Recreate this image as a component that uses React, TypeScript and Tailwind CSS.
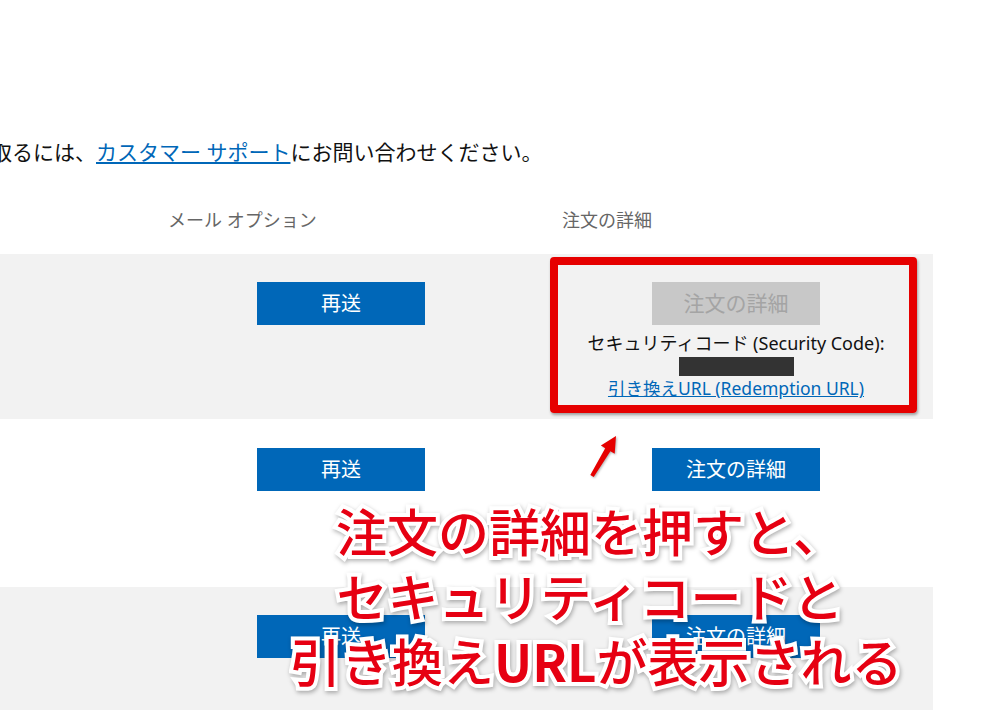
import React from 'react';

const font = { fontFamily: '"Noto Sans", "Noto Sans CJK JP", sans-serif' };

function BlueButton({ label }: { label: string }) {
    return (
        <div className="w-[168px] h-[43px] bg-[#0067b8] text-white text-[20px] flex items-center justify-center">
            {label}
        </div>
    );
}

function OrderRow({ gray, height, top, detail }: { gray: boolean; height: string; top: string; detail?: boolean }) {
    return (
        <div className={`grid grid-cols-[158px_394px_381px] ${height} ${gray ? 'bg-[#f2f2f2]' : 'bg-white'}`}>
            <div />
            <div className={`w-[366px] flex justify-center ${top}`}>
                <BlueButton label="再送" />
            </div>
            <div className={`w-[368px] flex flex-col items-center ${top}`}>
                {detail ? (
                    <>
                        <div className="w-[168px] h-[43px] bg-[#c8c8c8] text-[#a4a4a4] text-[21px] flex items-center justify-center">
                            注文の詳細
                        </div>
                        <p className="mt-[7px] text-[18px] leading-[22px] text-[#111]">セキュリティコード (Security Code):</p>
                        <div className="mt-[3px] w-[115px] h-[19px] bg-[#333]" />
                        <a className="mt-[1px] text-[17.5px] leading-[22px] text-[#0067b8] underline">引き換えURL (Redemption URL)</a>
                    </>
                ) : (
                    <BlueButton label="注文の詳細" />
                )}
            </div>
        </div>
    );
}

export default function App() {
    return (
        <div className="relative w-[1000px] h-[710px] overflow-hidden bg-white" style={font}>
            <p className="pt-[138px] -ml-[9px] text-[21px] leading-[28px] text-[#111] whitespace-nowrap">
                取るには、<a className="text-[#0067b8] underline">カスタマー サポート</a>にお問い合わせください。
            </p>
            <div className="grid grid-cols-[158px_394px_381px] w-[933px] h-[88px] pt-[42px] text-[18px] leading-[24px] text-[#666]">
                <div />
                <div className="px-[10px]">メール オプション</div>
                <div className="px-[10px]">注文の詳細</div>
            </div>
            <div className="w-[933px]">
                <OrderRow gray height="h-[165px]" top="pt-[28px]" detail />
                <OrderRow gray={false} height="h-[168px]" top="pt-[29px]" />
                <OrderRow gray height="h-[140px]" top="pt-[28px]" />
            </div>

            {/* annotation overlay */}
            <div className="absolute left-[550px] top-[257px] w-[367px] h-[156px] border-[8px] border-[#e60000] rounded-[4px] shadow-[1px_2px_3px_rgba(0,0,0,0.35)]" />
            <svg className="absolute left-[580px] top-[425px] [filter:drop-shadow(1px_1px_1px_rgba(0,0,0,0.3))]" width="44" height="56" viewBox="0 0 44 56">
                <path d="M10.3 50 L25.2 23.2 L20.9 20.6 L36 11 L34.7 28.8 L30.4 26.2 L13.7 52 Z" fill="#e60000" />
            </svg>
            <div
                className="absolute left-[290px] top-[498px] w-[600px] text-center text-[51px] leading-[65px] font-medium text-[#e60012] [paint-order:stroke_fill] [-webkit-text-stroke:8px_white] [filter:drop-shadow(1px_2px_2px_rgba(0,0,0,0.3))] whitespace-nowrap"
                style={{ fontFamily: '"Noto Sans CJK JP", sans-serif' }}
            >
                <div>注文の詳細を押すと、</div>
                <div>セキュリティコードと</div>
                <div>引き換え<span className="font-bold">URL</span>が表示される</div>
            </div>
        </div>
    );
}
